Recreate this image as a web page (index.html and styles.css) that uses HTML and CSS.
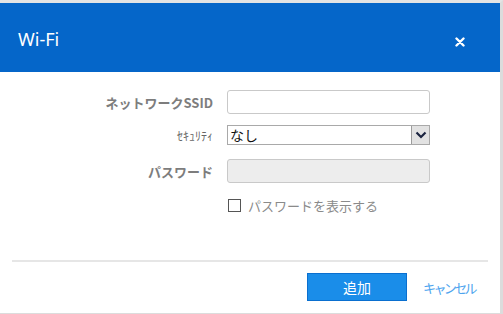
FILE: index.html
```html
<!DOCTYPE html>
<html>
<head lang="ja">
    <meta charset="UTF-8">
    <title>Wi-Fi</title>
    <link rel="stylesheet" href="styles.css">
</head>
<body>
  <div class="dialog">
    <div class="header">
      <span class="title">Wi-Fi</span>
      <span class="close">
        <svg width="10" height="10" viewBox="0 0 10 10"><path d="M1.5 1.5 L8.5 8.5 M8.5 1.5 L1.5 8.5" stroke="#fff" stroke-width="2.4" stroke-linecap="round"/></svg>
      </span>
    </div>
    <div class="form">
      <div class="row row-ssid">
        <label class="lbl">ネットワークSSID</label>
        <input class="field" type="text">
      </div>
      <div class="row row-sec">
        <label class="lbl lbl-small">ｾｷｭﾘﾃｨ</label>
        <div class="select">
          <select><option>なし</option></select>
          <span class="arrow">
            <svg width="12" height="8" viewBox="0 0 12 8"><path d="M1.5 1.5 L6 6 L10.5 1.5" fill="none" stroke="#1b2440" stroke-width="2.2"/></svg>
          </span>
        </div>
      </div>
      <div class="row row-pass">
        <label class="lbl">パスワード</label>
        <input class="field disabled" type="password" disabled>
      </div>
      <div class="row row-check">
        <span class="lbl"></span>
        <label class="check"><span class="box"></span>パスワードを表示する</label>
      </div>
    </div>
    <div class="divider"></div>
    <div class="footer">
      <button class="btn">追加</button>
      <a class="cancel">キャンセル</a>
    </div>
  </div>
</body>
</html>
```

FILE: styles.css
```css
*{
  margin: 0;
  padding: 0;
  box-sizing: border-box;
}
body{
  background: #fff;
  font-family: "Noto Sans", "Noto Sans CJK JP", sans-serif;
}
.dialog{
  width: 503px;
  height: 314px;
  border-top: 3px solid #e4e4e4;
  border-right: 3px solid #dcdcdc;
  border-bottom: 1px solid #dcdcdc;
}
.header{
  height: 69px;
  background: #0566c9;
  display: flex;
  align-items: center;
  justify-content: space-between;
  padding: 0 35px 0 18px;
}
.title{
  color: #fff;
  font-size: 18px;
  margin-top: 2px;
}
.close{
  display: flex;
  margin-top: 8px;
}
.form{
  padding-top: 18px;
}
.row{
  display: flex;
  align-items: center;
}
.lbl{
  width: 213px;
  text-align: right;
  color: #7d7d7d;
  font-weight: bold;
  font-size: 13px;
  margin-right: 14px;
  font-family: "Noto Sans CJK JP", sans-serif;
}
.lbl-small{
  font-weight: normal;
  font-size: 12px;
  color: #666;
}
.field{
  width: 203px;
  height: 24px;
  border: 1px solid #c9c9c9;
  border-radius: 3px;
  background: #fff;
}
.field.disabled{
  background: #ededed;
}
.row-sec{
  margin-top: 11px;
}
.select{
  width: 203px;
  height: 20px;
  border: 1px solid #a9a9a9;
  display: flex;
  align-items: center;
  background: #fff;
}
.select select{
  flex: 1;
  appearance: none;
  -webkit-appearance: none;
  border: none;
  background: transparent;
  font-family: "Noto Sans CJK JP", sans-serif;
  font-size: 14px;
  color: #111;
  padding-left: 2px;
  height: 18px;
  line-height: 18px;
  outline: none;
}
.arrow{
  width: 18px;
  height: 18px;
  background: #e2e2e2;
  border-left: 1px solid #9c9c9c;
  display: flex;
  align-items: center;
  justify-content: center;
}
.row-pass{
  margin-top: 14px;
}
.row-check{
  margin-top: 13px;
}
.check{
  display: flex;
  align-items: center;
  color: #8a8a8a;
  font-size: 13px;
  font-family: "Noto Sans CJK JP", sans-serif;
}
.box{
  width: 13px;
  height: 13px;
  border: 1px solid #555;
  margin: 0 7px 0 1px;
}
.divider{
  margin: 45px 12px 0 12px;
  height: 2px;
  background: #e6e6e6;
}
.footer{
  display: flex;
  align-items: center;
  padding: 11px 0 0 307px;
}
.btn{
  width: 100px;
  height: 28px;
  background: #1a8de9;
  border: 1px solid #0a6fcf;
  color: #fff;
  font-size: 14px;
  font-family: "Noto Sans CJK JP", sans-serif;
}
.cancel{
  margin-left: 16px;
  color: #4ea4ee;
  font-size: 13px;
  letter-spacing: -2.6px;
  font-family: "Noto Sans CJK JP", sans-serif;
  cursor: pointer;
}
```
